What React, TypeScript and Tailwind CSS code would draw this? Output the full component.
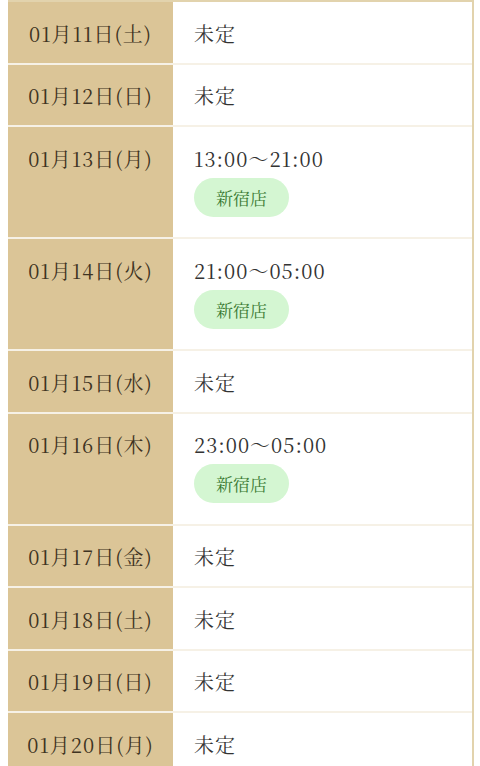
const rows: { date: string; time?: string; shop?: string }[] = [
  { date: '01月11日(土)' },
  { date: '01月12日(日)' },
  { date: '01月13日(月)', time: '13:00～21:00', shop: '新宿店' },
  { date: '01月14日(火)', time: '21:00～05:00', shop: '新宿店' },
  { date: '01月15日(水)' },
  { date: '01月16日(木)', time: '23:00～05:00', shop: '新宿店' },
  { date: '01月17日(金)' },
  { date: '01月18日(土)' },
  { date: '01月19日(日)' },
  { date: '01月20日(月)' },
]

const serif = "font-['Noto_Serif_CJK_JP','Liberation_Serif','Noto_Sans_CJK_JP',serif]"

export default function App() {
  return (
    <div className={`bg-white min-h-[766px] pl-2 pr-1.5 ${serif}`}>
      <div className="border-2 border-[#e2d3ad] border-l-0">
        {rows.map((r) => (
          <div key={r.date} className="flex border-b-2 border-[#f6f1e6] last:border-b-0">
            <div className="w-[165px] shrink-0 bg-[#dbc597] pt-[17.5px] pb-[16px] text-center text-[20px] leading-[27px] tracking-[1px] text-[#3e3322]">
              {r.date}
            </div>
            <div className="flex-1 pl-[21px] pt-[17.5px] pb-[16px] text-[20px] leading-[27px] tracking-[1px] text-[#333]">
              {r.time ? (
                <div className="flex flex-col items-start">
                  <span>{r.time}</span>
                  <span className="mt-[6px] mb-[4.5px] rounded-full bg-[#d4f6d2] px-[22px] h-[39px] flex items-center text-[17px] tracking-normal text-[#3a7a33]">
                    {r.shop}
                  </span>
                </div>
              ) : (
                <span>未定</span>
              )}
            </div>
          </div>
        ))}
      </div>
    </div>
  )
}
